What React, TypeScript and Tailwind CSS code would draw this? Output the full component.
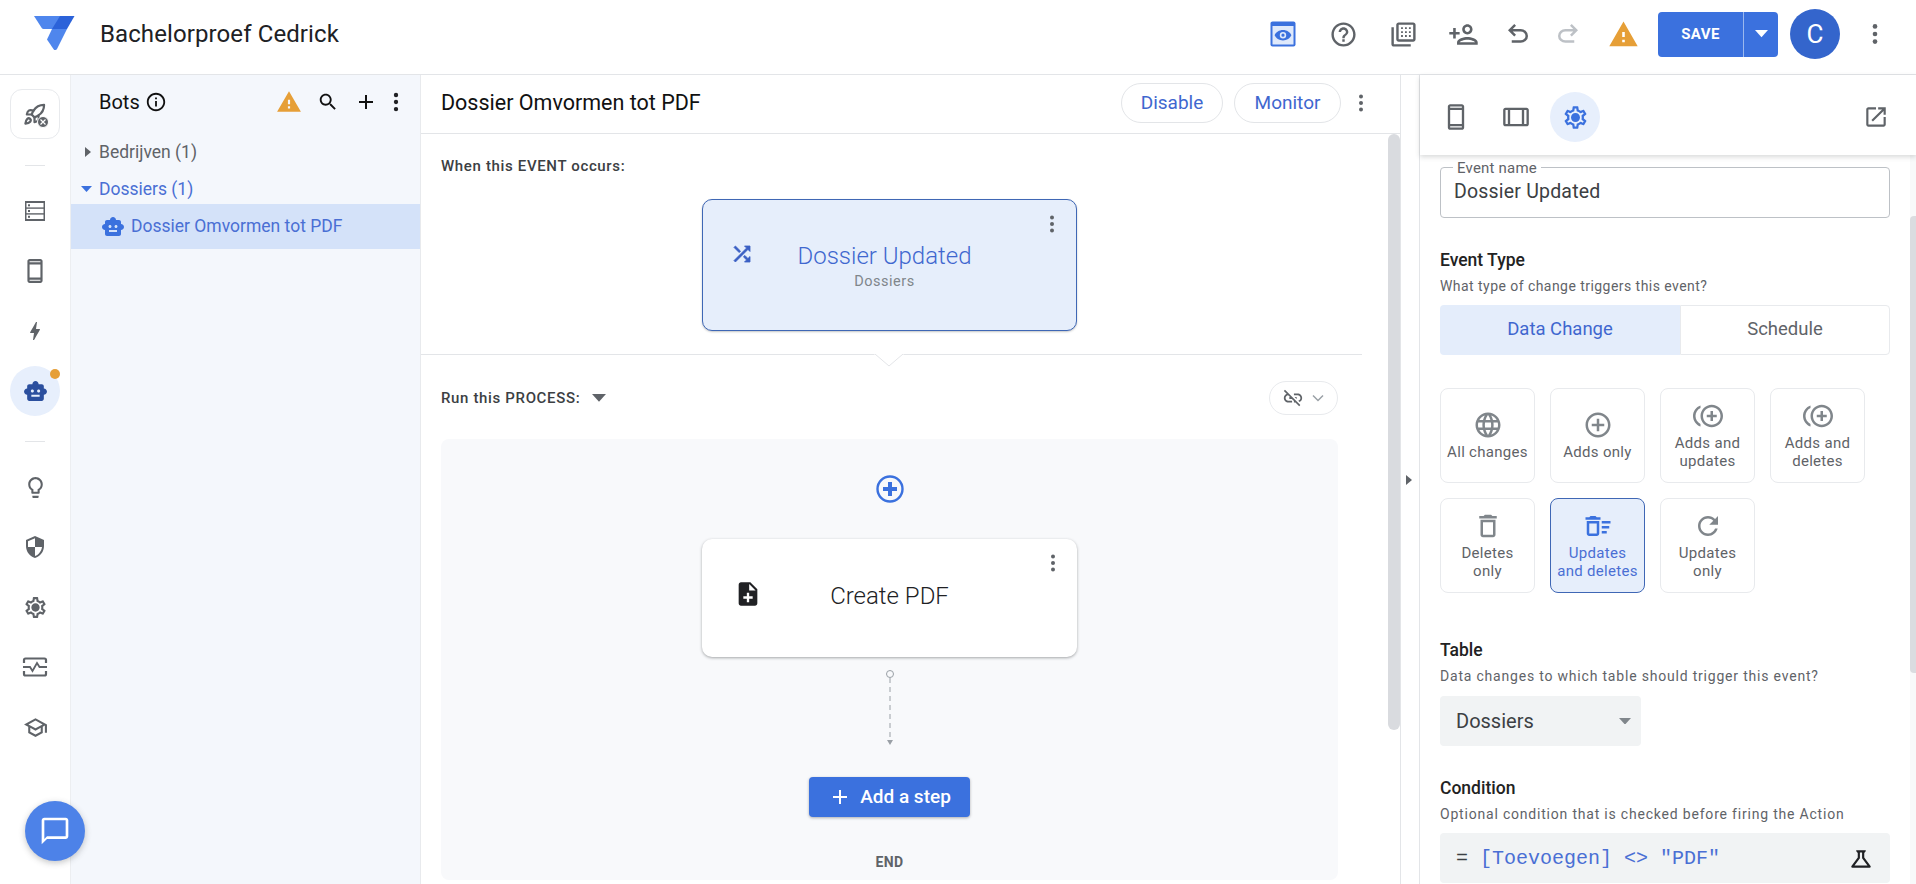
import React from "react";
import { Rocket } from "lucide-react";

const P: Record<string, string> = {
  help: "M11 18h2v-2h-2v2zm1-16C6.48 2 2 6.48 2 12s4.48 10 10 10 10-4.48 10-10S17.52 2 12 2zm0 18c-4.41 0-8-3.59-8-8s3.59-8 8-8 8 3.59 8 8-3.59 8-8 8zm0-14c-2.21 0-4 1.79-4 4h2c0-1.1.9-2 2-2s2 .9 2 2c0 2-3 1.75-3 5h2c0-2.25 3-2.5 3-5 0-2.21-1.79-4-4-4z",
  warning: "M1 21h22L12 2 1 21zm12-3h-2v-2h2v2zm0-4h-2v-4h2v4z",
  search: "M15.5 14h-.79l-.28-.27C15.41 12.59 16 11.11 16 9.5 16 5.91 13.09 3 9.5 3S3 5.91 3 9.5 5.91 16 9.5 16c1.61 0 3.09-.59 4.23-1.57l.27.28v.79l5 4.99L20.49 19l-4.99-5zm-6 0C7.01 14 5 11.99 5 9.5S7.01 5 9.5 5 14 7.01 14 9.5 11.99 14 9.5 14z",
  add: "M19 13h-6v6h-2v-6H5v-2h6V5h2v6h6v2z",
  info: "M11 7h2v2h-2zm0 4h2v6h-2zm1-9C6.48 2 2 6.48 2 12s4.48 10 10 10 10-4.48 10-10S17.52 2 12 2zm0 18c-4.41 0-8-3.59-8-8s3.59-8 8-8 8 3.59 8 8-3.59 8-8 8z",
  bot: "M20 9V7c0-1.1-.9-2-2-2h-3c0-1.66-1.34-3-3-3S9 3.34 9 5H6c-1.1 0-2 .9-2 2v2c-1.66 0-3 1.34-3 3s1.34 3 3 3v4c0 1.1.9 2 2 2h12c1.1 0 2-.9 2-2v-4c1.66 0 3-1.34 3-3s-1.34-3-3-3zM7.5 11.5c0-.83.67-1.5 1.5-1.5s1.5.67 1.5 1.5S9.83 13 9 13s-1.5-.67-1.5-1.5zM16 17H8v-2h8v2zm-1-4c-.83 0-1.5-.67-1.5-1.5S14.17 10 15 10s1.5.67 1.5 1.5S15.83 13 15 13z",
  personAdd: "M15 12c2.21 0 4-1.79 4-4s-1.79-4-4-4-4 1.79-4 4 1.79 4 4 4zm0-6c1.1 0 2 .9 2 2s-.9 2-2 2-2-.9-2-2 .9-2 2-2zm0 8c-2.67 0-8 1.34-8 4v2h16v-2c0-2.66-5.33-4-8-4zm-6 4c.22-.72 3.31-2 6-2 2.7 0 5.8 1.29 6 2H9zm-3-3v-3h3v-2H6V7H4v3H1v2h3v3h2z",
  shuffle: "M10.59 9.17L5.41 4 4 5.41l5.17 5.17 1.42-1.41zM14.5 4l2.04 2.04L4 18.59 5.41 20 17.96 7.46 20 9.5V4h-5.5zm.33 9.41l-1.41 1.41 3.13 3.13L14.5 20H20v-5.5l-2.04 2.04-3.13-3.13z",
  noteAdd: "M14 2H6c-1.1 0-1.99.9-1.99 2L4 20c0 1.1.89 2 1.99 2H18c1.1 0 2-.9 2-2V8l-6-6zm2 14h-3v3h-2v-3H8v-2h3v-3h2v3h3v2zm-3-7V3.5L18.5 9H13z",
  settings: "M19.43 12.98c.04-.32.07-.64.07-.98 0-.34-.03-.66-.07-.98l2.11-1.65c.19-.15.24-.42.12-.64l-2-3.46c-.09-.16-.26-.25-.44-.25-.06 0-.12.01-.17.03l-2.49 1c-.52-.4-1.08-.73-1.69-.98l-.38-2.65C14.46 2.18 14.25 2 14 2h-4c-.25 0-.46.18-.49.42l-.38 2.65c-.61.25-1.17.59-1.69.98l-2.49-1c-.06-.02-.12-.03-.18-.03-.17 0-.34.09-.43.25l-2 3.46c-.13.22-.07.49.12.64l2.11 1.65c-.04.32-.07.65-.07.98 0 .33.03.66.07.98l-2.11 1.65c-.19.15-.24.42-.12.64l2 3.46c.09.16.26.25.44.25.06 0 .12-.01.17-.03l2.49-1c.52.4 1.08.73 1.69.98l.38 2.65c.03.24.24.42.49.42h4c.25 0 .46-.18.49-.42l.38-2.65c.61-.25 1.17-.59 1.69-.98l2.49 1c.06.02.12.03.18.03.17 0 .34-.09.43-.25l2-3.46c.12-.22.07-.49-.12-.64l-2.11-1.65zm-1.98-1.71c.04.31.05.52.05.73 0 .21-.02.43-.05.73l-.14 1.13.89.7 1.08.84-.7 1.21-1.27-.51-1.04-.42-.9.68c-.43.32-.84.56-1.25.73l-1.06.43-.16 1.13-.2 1.35h-1.4l-.19-1.35-.16-1.13-1.06-.43c-.43-.18-.83-.41-1.23-.71l-.91-.7-1.06.43-1.27.51-.7-1.21 1.08-.84.89-.7-.14-1.13c-.03-.31-.05-.54-.05-.74s.02-.43.05-.73l.14-1.13-.89-.7-1.08-.84.7-1.21 1.27.51 1.04.42.9-.68c.43-.32.84-.56 1.25-.73l1.06-.43.16-1.13.2-1.35h1.39l.19 1.35.16 1.13 1.06.43c.43.18.83.41 1.23.71l.91.7 1.06-.43 1.27-.51.7 1.21-1.07.85-.89.7.14 1.13zM12 8c-2.21 0-4 1.79-4 4s1.79 4 4 4 4-1.79 4-4-1.79-4-4-4z",
  bulb: "M9 21c0 .55.45 1 1 1h4c.55 0 1-.45 1-1v-1H9v1zm3-19C8.14 2 5 5.14 5 9c0 2.38 1.19 4.47 3 5.74V17c0 .55.45 1 1 1h6c.55 0 1-.45 1-1v-2.26c1.81-1.27 3-3.36 3-5.74 0-3.86-3.14-7-7-7zm2.85 11.1l-.85.6V16h-4v-2.3l-.85-.6C7.8 12.16 7 10.63 7 9c0-2.76 2.24-5 5-5s5 2.24 5 5c0 1.63-.8 3.16-2.15 4.1z",
  shield: "M12 1L3 5v6c0 5.55 3.84 10.74 9 12 5.16-1.26 9-6.45 9-12V5l-9-4zm0 10.99h7c-.53 4.12-3.28 7.79-7 8.94V12H5V6.3l7-3.11v8.8z",
  school: "M12 3L1 9l4 2.18v6L12 21l7-3.82v-6l2-1.09V17h2V9L12 3zm6.82 6L12 12.72 5.18 9 12 5.28 18.82 9zM17 15.99l-5 2.73-5-2.73v-3.72L12 15l5-2.73v3.72z",
  bolt: "M11 21h-1l1-7H7.5c-.58 0-.57-.32-.38-.66.19-.34.05-.08.07-.12C8.48 10.94 10.42 7.54 13 3h1l-1 7h3.5c.49 0 .56.33.47.51l-.07.15C12.96 17.55 11 21 11 21z",
  chat: "M20 2H4c-1.1 0-2 .9-2 2v18l4-4h14c1.1 0 2-.9 2-2V4c0-1.1-.9-2-2-2zm0 14H6l-2 2V4h16v12z",
  open: "M19 19H5V5h7V3H5c-1.11 0-2 .9-2 2v14c0 1.1.89 2 2 2h14c1.1 0 2-.9 2-2v-7h-2v7zM14 3v2h3.59l-9.83 9.83 1.41 1.41L19 6.41V10h2V3h-7z",
  addCircle: "M13 7h-2v4H7v2h4v4h2v-4h4v-2h-4V7zm-1-5C6.48 2 2 6.48 2 12s4.48 10 10 10 10-4.48 10-10S17.52 2 12 2zm0 18c-4.41 0-8-3.59-8-8s3.59-8 8-8 8 3.59 8 8-3.59 8-8 8z",
  dup: "M16 8h-2v3h-3v2h3v3h2v-3h3v-2h-3zM2 12c0-2.79 1.64-5.2 4.01-6.32V3.52C2.52 4.76 0 8.09 0 12s2.52 7.24 6.01 8.48v-2.16C3.64 17.2 2 14.79 2 12zm13-9c-4.96 0-9 4.04-9 9s4.04 9 9 9 9-4.04 9-9-4.04-9-9-9zm0 16c-3.86 0-7-3.14-7-7s3.14-7 7-7 7 3.14 7 7-3.14 7-7 7z",
  del: "M6 19c0 1.1.9 2 2 2h8c1.1 0 2-.9 2-2V7H6v12zM8 9h8v10H8V9zm7.5-5l-1-1h-5l-1 1H5v2h14V4z",
  sweep: "M15 16h4v2h-4zm0-8h7v2h-7zm0 4h6v2h-6zM3 18c0 1.1.9 2 2 2h6c1.1 0 2-.9 2-2V8H3v10zm2-8h6v8H5v-8zm5-6H6L5 5H2v2h12V5h-3z",
  refresh: "M17.65 6.35C16.2 4.9 14.21 4 12 4c-4.42 0-7.99 3.58-7.99 8s3.57 8 7.99 8c3.73 0 6.84-2.55 7.73-6h-2.08c-.82 2.33-3.04 4-5.65 4-3.31 0-6-2.69-6-6s2.69-6 6-6c1.66 0 3.14.69 4.22 1.78L13 11h7V4l-2.35 2.35z",
  linkOff: "M17 7h-4v1.9h4c1.71 0 3.1 1.39 3.1 3.1 0 1.43-.98 2.63-2.31 2.98l1.46 1.46C20.88 15.61 22 13.95 22 12c0-2.76-2.24-5-5-5zm-1 4h-2.19l2 2H16zM2 4.27l3.11 3.11C3.29 8.12 2 9.91 2 12c0 2.76 2.24 5 5 5h4v-1.9H7c-1.71 0-3.1-1.39-3.1-3.1 0-1.59 1.21-2.9 2.76-3.07L8.73 11H8v2h2.73L13 15.27V17h1.73l4.01 4L20 19.74 3.27 3 2 4.27z",
  flask: "M13 11.33L18 18H6l5-6.67V6h2m2.96-2H8.04c-.42 0-.65.48-.39.81L9 6.5v4.17L3.2 18.4c-.49.65-.03 1.6.8 1.6h16c.82 0 1.29-.95.8-1.6L15 10.67V6.5l1.35-1.69c.26-.33.03-.81-.39-.81z",
  undo: "M7 19v-2h7.1q1.57 0 2.74-1T18 13.5q0-1.5-1.16-2.5T14.1 10H7.8l2.6 2.6L9 14 4 9l5-5 1.4 1.4L7.8 8h6.3q2.43 0 4.16 1.58T20 13.5q0 2.35-1.74 3.93T14.1 19z",
  redo: "M9.9 19q-2.43 0-4.16-1.58T4 13.5q0-2.35 1.74-3.93T9.9 8h6.3l-2.6-2.6L15 4l5 5-5 5-1.4-1.4 2.6-2.6H9.9q-1.57 0-2.74 1T6 13.5q0 1.5 1.16 2.5T9.9 17H17v2z",
  phone: "M17 1H7C5.9 1 5 1.9 5 3v18c0 1.1.9 2 2 2h10c1.1 0 2-.9 2-2V3c0-1.1-.9-2-2-2zm0 20H7v-1h10v1zm0-3H7V6h10v12zm0-14H7V3h10v1z",
  side: "M21 4H3c-1.1 0-2 .9-2 2v12c0 1.1.9 2 2 2h18c1.1 0 2-.9 2-2V6c0-1.1-.9-2-2-2zM3 18V6h2v12H3zm4 0V6h10v12H7zm14 0h-2V6h2v12z",
  library: "M4 6H2v14c0 1.1.9 2 2 2h14v-2H4V6zm16-4H8c-1.1 0-2 .9-2 2v12c0 1.1.9 2 2 2h12c1.1 0 2-.9 2-2V4c0-1.1-.9-2-2-2zm0 14H8V4h12v12zM10 6h1.5v1.5H10zm3.25 0h1.5v1.5h-1.5zm3.25 0H18v1.5h-1.5zM10 9.25h1.5v1.5H10zm3.25 0h1.5v1.5h-1.5zm3.25 0H18v1.5h-1.5zM10 12.5h1.5V14H10zm3.25 0h1.5V14h-1.5zm3.25 0H18V14h-1.5z",
  globe: "M12 2C6.48 2 2 6.48 2 12s4.48 10 10 10 10-4.48 10-10S17.52 2 12 2zm6.93 6h-2.95c-.32-1.25-.78-2.45-1.38-3.56 1.84.63 3.37 1.91 4.33 3.56zM12 4.04c.83 1.2 1.48 2.53 1.91 3.96h-3.82c.43-1.43 1.08-2.76 1.91-3.96zM4.26 14C4.1 13.36 4 12.69 4 12s.1-1.36.26-2h3.38c-.08.66-.14 1.32-.14 2s.06 1.34.14 2H4.26zm.82 2h2.95c.32 1.25.78 2.45 1.38 3.56-1.84-.63-3.37-1.9-4.33-3.56zm2.95-8H5.08c.96-1.66 2.49-2.93 4.33-3.56C8.81 5.55 8.35 6.75 8.03 8zM12 19.96c-.83-1.2-1.48-2.53-1.91-3.96h3.82c-.43 1.43-1.08 2.76-1.91 3.96zM14.34 14H9.66c-.09-.66-.16-1.32-.16-2s.07-1.35.16-2h4.68c.09.65.16 1.32.16 2s-.07 1.34-.16 2zm.25 5.56c.6-1.11 1.06-2.31 1.38-3.56h2.95c-.96 1.65-2.49 2.93-4.33 3.56zM16.36 14c.08-.66.14-1.32.14-2s-.06-1.34-.14-2h3.38c.16.64.26 1.31.26 2s-.1 1.36-.26 2h-3.38z",
};

function Ic({ n, s = 24, c = "#5f6368", className = "", sw = 0 }: { n: string; s?: number; c?: string; className?: string; sw?: number }) {
  return (
    <svg width={s} height={s} viewBox="0 0 24 24" fill={c} stroke={sw ? c : "none"} strokeWidth={sw} className={`shrink-0 ${className}`}>
      <path fillRule="evenodd" d={P[n]} />
    </svg>
  );
}

function Dots({ c = "#5f6368", s = 24 }: { c?: string; s?: number }) {
  return (
    <svg width={s} height={s} viewBox="0 0 24 24" fill={c} className="shrink-0">
      <circle cx="12" cy="5.5" r="2" />
      <circle cx="12" cy="12" r="2" />
      <circle cx="12" cy="18.5" r="2" />
    </svg>
  );
}

function Logo() {
  return (
    <svg width="42" height="38" viewBox="0 0 42 38" className="shrink-0">
      <path d="M0 1h27v13H9.5a2 2 0 0 1-1.6-.8z" fill="#4f86ed" />
      <path d="M26 1h14.5L33 14H18z" fill="#2b62d9" />
      <path d="M18 14h15L23 34a2 2 0 0 1-3.4.2L13 24.5z" fill="#4f86ed" />
    </svg>
  );
}

function PreviewIcon() {
  return (
    <svg width="26" height="26" viewBox="0 0 26 26" className="shrink-0">
      <rect x="0.5" y="0.5" width="25" height="25" rx="2" fill="#3b71de" />
      <rect x="2.5" y="5" width="21" height="18.5" fill="#dfe9fb" />
      <path fillRule="evenodd" fill="#3b71de" d="M13 9c-3.9 0-7 2.2-8.4 5.2C6 17.2 9.1 19.4 13 19.4s7-2.2 8.4-5.2C20 11.2 16.9 9 13 9zm0 8.4a3.2 3.2 0 1 1 0-6.4 3.2 3.2 0 0 1 0 6.4zm0-1.6a1.6 1.6 0 1 0 0-3.2 1.6 1.6 0 0 0 0 3.2z" />
    </svg>
  );
}

function TableIcon() {
  return (
    <svg width="22" height="22" viewBox="0 0 22 22" className="shrink-0">
      <rect x="1" y="1" width="20" height="20" fill="#5f6368" />
      <rect x="2.5" y="3" width="17" height="4.4" fill="#fff" />
      <rect x="2.5" y="8.8" width="17" height="4.4" fill="#fff" />
      <rect x="2.5" y="14.6" width="17" height="4.4" fill="#fff" />
      <rect x="4" y="4.3" width="2" height="2" fill="#5f6368" />
      <rect x="4" y="10" width="2" height="2" fill="#5f6368" />
      <rect x="4" y="15.8" width="2" height="2" fill="#5f6368" />
    </svg>
  );
}

function MonitorIcon() {
  return (
    <svg width="26" height="24" viewBox="0 0 26 24" fill="none" stroke="#5f6368" strokeWidth="2.2" className="shrink-0">
      <path d="M2 8V5a1.5 1.5 0 0 1 1.5-1.5h19A1.5 1.5 0 0 1 24 5v3M2 16v3a1.5 1.5 0 0 0 1.5 1.5h19A1.5 1.5 0 0 0 24 19v-3" />
      <path d="M1 12h7l2.5 4 4.5-8 2.5 4H25" strokeWidth="1.8" />
    </svg>
  );
}

function Caret({ c = "#5f6368", w = 12 }: { c?: string; w?: number }) {
  return (
    <svg width={w} height={w * 0.55} viewBox="0 0 12 6.6" fill={c} className="shrink-0">
      <path d="M0 0h12L6 6.6z" />
    </svg>
  );
}

function RailItem({ children }: { children: React.ReactNode }) {
  return <div className="h-[60px] w-full flex items-center justify-center">{children}</div>;
}

function Rail() {
  return (
    <aside className="w-[71px] shrink-0 flex flex-col items-center pt-[14px] bg-white border-r border-[#eceef1]">
      <div className="relative w-[50px] h-[50px] rounded-xl border border-[#e8eaed] flex items-center justify-center mr-[1px]">
        <Rocket size={23} color="#5f6368" strokeWidth={2.3} />
        <span className="absolute right-[10px] bottom-[10px] w-[12px] h-[12px] rounded-full bg-[#5f6368] border border-white flex items-center justify-center">
          <svg width="6" height="6" viewBox="0 0 6 6" stroke="#fff" strokeWidth="1.2"><path d="M0.5 0.5l5 5M5.5 0.5l-5 5" /></svg>
        </span>
      </div>
      <div className="w-5 h-px bg-[#e3e5e8] mt-[26px] mb-[15px]" />
      <RailItem><TableIcon /></RailItem>
      <RailItem><Ic n="phone" s={26} /></RailItem>
      <RailItem><Ic n="bolt" s={24} /></RailItem>
      <RailItem>
        <div className="relative w-[50px] h-[50px] rounded-full bg-[#e7effc] flex items-center justify-center">
          <Ic n="bot" s={25} c="#2b4f9e" />
          <span className="absolute right-0 top-[3px] w-[10px] h-[10px] rounded-full bg-[#e69f37]" />
        </div>
      </RailItem>
      <div className="w-5 h-px bg-[#e3e5e8] mt-5 mb-[15px]" />
      <RailItem><Ic n="bulb" s={25} /></RailItem>
      <RailItem><Ic n="shield" s={24} /></RailItem>
      <RailItem><Ic n="settings" s={25} /></RailItem>
      <RailItem><MonitorIcon /></RailItem>
      <RailItem><Ic n="school" s={25} /></RailItem>
    </aside>
  );
}

function BotsPanel() {
  return (
    <section className="w-[350px] shrink-0 bg-[#f4f7fc] flex flex-col border-r border-[#e8eaed]">
      <div className="h-[58px] flex items-center pl-[28px] pr-[11px] pb-1">
        <span className="text-[20px] text-[#111]">Bots</span>
        <Ic n="info" s={22} c="#111" className="ml-[5px]" />
        <div className="flex-1" />
        <Ic n="warning" s={26} c="#e69f37" />
        <Ic n="search" s={22} c="#111" className="ml-[15px]" />
        <Ic n="add" s={24} c="#111" className="ml-[15px]" />
        <div className="ml-[5px]"><Dots c="#202124" s={26} /></div>
      </div>
      <div className="h-[38px] flex items-center pl-[10px] text-[17.5px] text-[#5f6368]">
        <svg width="8" height="12" viewBox="0 0 8 12" fill="#5f6368" className="mr-[6px] ml-[3px]"><path d="M1 1l6 5-6 5z" /></svg>
        <span className="ml-[1px]">Bedrijven (1)</span>
      </div>
      <div className="h-[33px] flex items-center pl-[10px] pt-[3px] text-[17.5px] text-[#4a6fd4]">
        <Caret c="#3b71de" w={11} />
        <span className="ml-[7px]">Dossiers (1)</span>
      </div>
      <div className="h-[45px] flex items-center pl-[30px] bg-[#d4e2f9] text-[17.5px] text-[#4a6fd4]">
        <Ic n="bot" s={24} c="#3b71de" />
        <span className="ml-[6px]">Dossier Omvormen tot PDF</span>
      </div>
    </section>
  );
}

function MainPanel() {
  return (
    <section className="w-[980px] shrink-0 flex flex-col border-r border-[#e3e5e8] min-h-0">
      <div className="h-[59px] shrink-0 flex items-center pl-5 pb-[2px] border-b border-[#e3e5e8]">
        <span className="text-[21.5px] text-[#111]">Dossier Omvormen tot PDF</span>
        <div className="flex-1" />
        <button className="h-[40px] w-[102px] rounded-full border border-[#e3e5e8] text-[#3f67cf] text-[19px]">Disable</button>
        <button className="h-[40px] w-[107px] ml-[11px] rounded-full border border-[#e3e5e8] text-[#3f67cf] text-[19px]">Monitor</button>
        <div className="ml-[8px] mr-[27px]"><Dots /></div>
      </div>
      <div className="flex-1 flex min-h-0">
        <div className="w-[941px] shrink-0 min-h-0">
          <div className="px-5 pt-[23px] text-[15px] font-medium tracking-[0.65px] text-[#3c4043] leading-[18px]">When this EVENT occurs:</div>
          <div className="ml-5 mr-6 flex justify-center">
            <div className="mt-[24px] w-[375px] h-[132px] relative rounded-[10px] border border-[#3f67b5] bg-[#e6eefb] shadow-[0_1px_2px_rgba(60,64,67,0.3)] flex items-center pb-[22px]">
              <Ic n="shuffle" s={24} c="#3b5fc4" sw={0.8} className="ml-[27px]" />
              <div className="absolute left-0 right-[10px] top-[41px] flex flex-col items-center">
                <span className="text-[24px] font-light leading-[30px] text-[#3f67cf]">Dossier Updated</span>
                <span className="text-[14.5px] leading-[20px] tracking-[0.5px] text-[#80868b] mt-[1px]">Dossiers</span>
              </div>
              <div className="absolute right-[12px] top-[12px]"><Dots s={24} /></div>
            </div>
          </div>
          <div className="relative mt-[23px] h-px bg-[#e3e5e8]">
            <svg width="32" height="14" viewBox="0 0 32 14" className="absolute left-[452px] top-0">
              <path d="M1 0h30L16 13z" fill="#fff" />
              <path d="M2 0l14 12L30 0" fill="none" stroke="#e3e5e8" />
            </svg>
          </div>
          <div className="ml-5 mr-6 mt-[26px] h-[34px] flex items-center">
            <span className="text-[15px] font-medium tracking-[0.65px] text-[#3c4043]">Run this PROCESS:</span>
            <span className="ml-[12px]"><Caret w={14} /></span>
            <div className="flex-1" />
            <div className="w-[69px] h-[34px] rounded-full border border-[#e8eaed] flex items-center justify-center gap-[7px]">
              <Ic n="linkOff" s={22} c="#5f6368" />
              <svg width="14" height="14" viewBox="0 0 14 14" fill="none" stroke="#9aa0a6" strokeWidth="1.5"><path d="M2 4.5l5 5 5-5" /></svg>
            </div>
          </div>
          <div className="ml-5 mr-6 mt-[24px] h-[441px] rounded-lg bg-[#f8f9fb] flex flex-col items-center pt-[35px]">
            <svg width="30" height="30" viewBox="0 0 30 30" className="shrink-0">
              <circle cx="15" cy="15" r="12.5" fill="none" stroke="#3b71de" strokeWidth="2.4" />
              <path d="M13 8h4v5h5v4h-5v5h-4v-5H8v-4h5z" fill="#3b71de" />
            </svg>
            <div className="relative mt-[35px] w-[375px] h-[118px] rounded-[10px] bg-white shadow-[0_1px_3px_rgba(60,64,67,0.45)] flex items-center pb-[8px]">
              <Ic n="noteAdd" s={28} c="#202124" className="ml-[32px]" />
              <span className="absolute inset-x-0 top-[42px] text-center text-[24px] font-light leading-[30px] text-[#202124]">Create PDF</span>
              <div className="absolute right-[12px] top-[12px]"><Dots s={24} /></div>
            </div>
            <svg width="16" height="78" viewBox="0 0 16 78" className="mt-[12px] shrink-0">
              <circle cx="8" cy="5" r="3.5" fill="none" stroke="#9aa0a6" />
              <path d="M8 9v62" stroke="#9aa0a6" strokeDasharray="5 4" />
              <path d="M5 71h6l-3 5z" fill="#9aa0a6" />
            </svg>
            <button className="mt-[30px] h-[40px] w-[161px] rounded bg-[#3b71de] shadow-[0_1px_3px_rgba(60,64,67,0.4)] text-white flex items-center justify-center text-[19px] font-medium">
              <Ic n="add" s={24} c="#fff" />
              <span className="ml-[8px]">Add a step</span>
            </button>
            <div className="mt-[36px] text-[14px] font-bold text-[#5f6368] leading-[18px] tracking-[0.3px]">END</div>
          </div>
        </div>
        <div className="flex-1 pl-[26px]">
          <div className="w-[12px] h-[596px] rounded-full bg-[#d9dbdf]" />
        </div>
      </div>
    </section>
  );
}

const OPTS = [
  { n: "globe", l: ["All changes"] },
  { n: "addCircle", l: ["Adds only"] },
  { n: "dup", l: ["Adds and", "updates"] },
  { n: "dup", l: ["Adds and", "deletes"] },
  { n: "del", l: ["Deletes", "only"] },
  { n: "sweep", l: ["Updates", "and deletes"], on: true },
  { n: "refresh", l: ["Updates", "only"] },
];

function RightPanel() {
  return (
    <section className="flex-1 min-w-0 flex flex-col border-l border-[#e3e5e8] ml-[18px] relative">
      <div className="h-[80px] shrink-0 flex items-center pt-[4px] relative z-10 bg-white shadow-[0_2px_5px_rgba(60,64,67,0.2)]">
        <div className="ml-[22px]"><Ic n="phone" s={28} /></div>
        <div className="ml-[32px]"><Ic n="side" s={28} /></div>
        <div className="ml-[20px] w-[50px] h-[50px] rounded-full bg-[#e7effc] flex items-center justify-center">
          <Ic n="settings" s={27} c="#3b71de" />
        </div>
        <div className="flex-1" />
        <div className="mr-[27px]"><Ic n="open" s={26} /></div>
      </div>
      <div className="flex-1 flex min-h-0">
        <div className="w-[488px] shrink-0 pl-5 pr-[18px] overflow-hidden">
          <div className="relative mt-3 h-[51px] rounded border border-[#bdc1c6] flex items-center pl-[13px] pb-[2px] text-[19.5px] text-[#3c4043] tracking-[0.2px]">
            <span className="absolute left-[12px] -top-[8px] px-[4px] bg-white text-[15px] leading-[16px] text-[#5f6368]">Event name</span>
            Dossier Updated
          </div>
          <div className="mt-[32px] text-[17.5px] font-medium text-[#222] leading-[20px]">Event Type</div>
          <div className="mt-[6px] text-[14px] tracking-[0.45px] text-[#5f6368] leading-[20px]">What type of change triggers this event?</div>
          <div className="mt-[9px] h-[50px] flex text-[18.5px]">
            <div className="w-[240px] bg-[#e4edfb] text-[#3f67cf] flex items-center justify-center rounded-l">Data Change</div>
            <div className="flex-1 border border-[#e8eaed] text-[#5f6368] flex items-center justify-center rounded-r">Schedule</div>
          </div>
          <div className="mt-[33px] grid grid-cols-[95px_95px_95px_95px] gap-[15px]">
            {OPTS.map((o, i) => (
              <div key={i} className={`h-[95px] rounded-lg border flex flex-col items-center justify-center ${o.on ? "border-[#3f67b5] bg-[#e6eefb] text-[#4a6fd4]" : "border-[#e8eaed] text-[#5f6368]"}`}>
                <Ic n={o.n} s={30} c={o.on ? "#3b71de" : "#80868b"} />
                <div className="mt-[3px] text-[15px] leading-[18px] tracking-[0.3px] text-center">
                  {o.l.map((t) => <div key={t}>{t}</div>)}
                </div>
              </div>
            ))}
          </div>
          <div className="mt-[47px] text-[17.5px] font-medium text-[#222] leading-[20px]">Table</div>
          <div className="mt-[6px] text-[14px] tracking-[0.8px] text-[#5f6368] leading-[20px]">Data changes to which table should trigger this event?</div>
          <div className="mt-[10px] w-[201px] h-[50px] rounded bg-[#f1f3f4] flex items-center pl-4 pr-[10px] text-[20px] text-[#3c4043] justify-between">
            Dossiers
            <Caret w={12} c="#80868b" />
          </div>
          <div className="mt-[32px] text-[17.5px] font-medium text-[#222] leading-[20px]">Condition</div>
          <div className="mt-[6px] text-[14px] tracking-[0.8px] text-[#5f6368] leading-[20px]">Optional condition that is checked before firing the Action</div>
          <div className="mt-[9px] h-[50px] rounded bg-[#f1f3f4] flex items-center pl-[16px] pr-[16px] pt-[2px] [font-family:'Liberation_Mono',monospace] text-[20px] justify-between">
            <span>
              <span className="text-[#3c4043]">=</span>
              <span className="text-[#4a6fd4] ml-[12px]">[Toevoegen] &lt;&gt; "PDF"</span>
            </span>
            <Ic n="flask" s={26} c="#202124" />
          </div>
        </div>
        <div className="ml-auto w-[6px] bg-[#f8f9fa] h-full">
          <div className="mt-[61px] w-[6px] h-[457px] rounded-l bg-[#dadce0]" />
        </div>
      </div>
    </section>
  );
}

export default function App() {
  return (
    <div className="relative w-[1916px] h-[884px] overflow-hidden bg-white flex flex-col [font-family:Roboto,sans-serif]">
      <header className="h-[75px] shrink-0 flex items-center pb-[6px] border-b border-[#e3e5e8] bg-white">
        <div className="ml-[34px]"><Logo /></div>
        <span className="ml-[24px] text-[24px] tracking-[0.1px] text-[#202124]">Bachelorproef Cedrick</span>
        <div className="flex-1" />
        <div className="w-[60px] flex justify-center"><PreviewIcon /></div>
        <div className="w-[60px] flex justify-center"><Ic n="help" s={29} /></div>
        <div className="w-[60px] flex justify-center"><Ic n="library" s={29} /></div>
        <div className="w-[60px] flex justify-center"><Ic n="personAdd" s={31} /></div>
        <div className="w-[50px] flex justify-center"><Ic n="undo" s={30} /></div>
        <div className="w-[50px] flex justify-center"><Ic n="redo" s={30} c="#bdc1c6" /></div>
        <div className="w-[60px] flex justify-center"><Ic n="warning" s={31} c="#e69f37" /></div>
        <div className="ml-[5px] h-[45px] w-[120px] rounded bg-[#3b71de] text-white flex overflow-hidden">
          <div className="w-[86px] flex items-center justify-center text-[15px] font-bold tracking-[0.4px] border-r border-[#9bb8ee]">SAVE</div>
          <div className="flex-1 flex items-center justify-center"><Caret c="#fff" w={13} /></div>
        </div>
        <div className="ml-[12px] w-[50px] h-[50px] rounded-full bg-[#3465cc] text-white text-[26px] flex items-center justify-center">C</div>
        <div className="ml-[21px] mr-[27px]"><Dots s={28} /></div>
      </header>
      <div className="flex-1 flex min-h-0">
        <Rail />
        <BotsPanel />
        <MainPanel />
        <RightPanel />
      </div>
      <button className="absolute left-[25px] top-[801px] w-[60px] h-[60px] rounded-full bg-[#4d82e8] shadow-[0_2px_6px_rgba(60,64,67,0.3)] flex items-center justify-center">
        <Ic n="chat" s={32} c="#fff" />
      </button>
      <div className="absolute left-[1405px] top-[474px]">
        <svg width="8" height="12" viewBox="0 0 8 12" fill="#5f6368"><path d="M1 1l6 5-6 5z" /></svg>
      </div>
    </div>
  );
}
